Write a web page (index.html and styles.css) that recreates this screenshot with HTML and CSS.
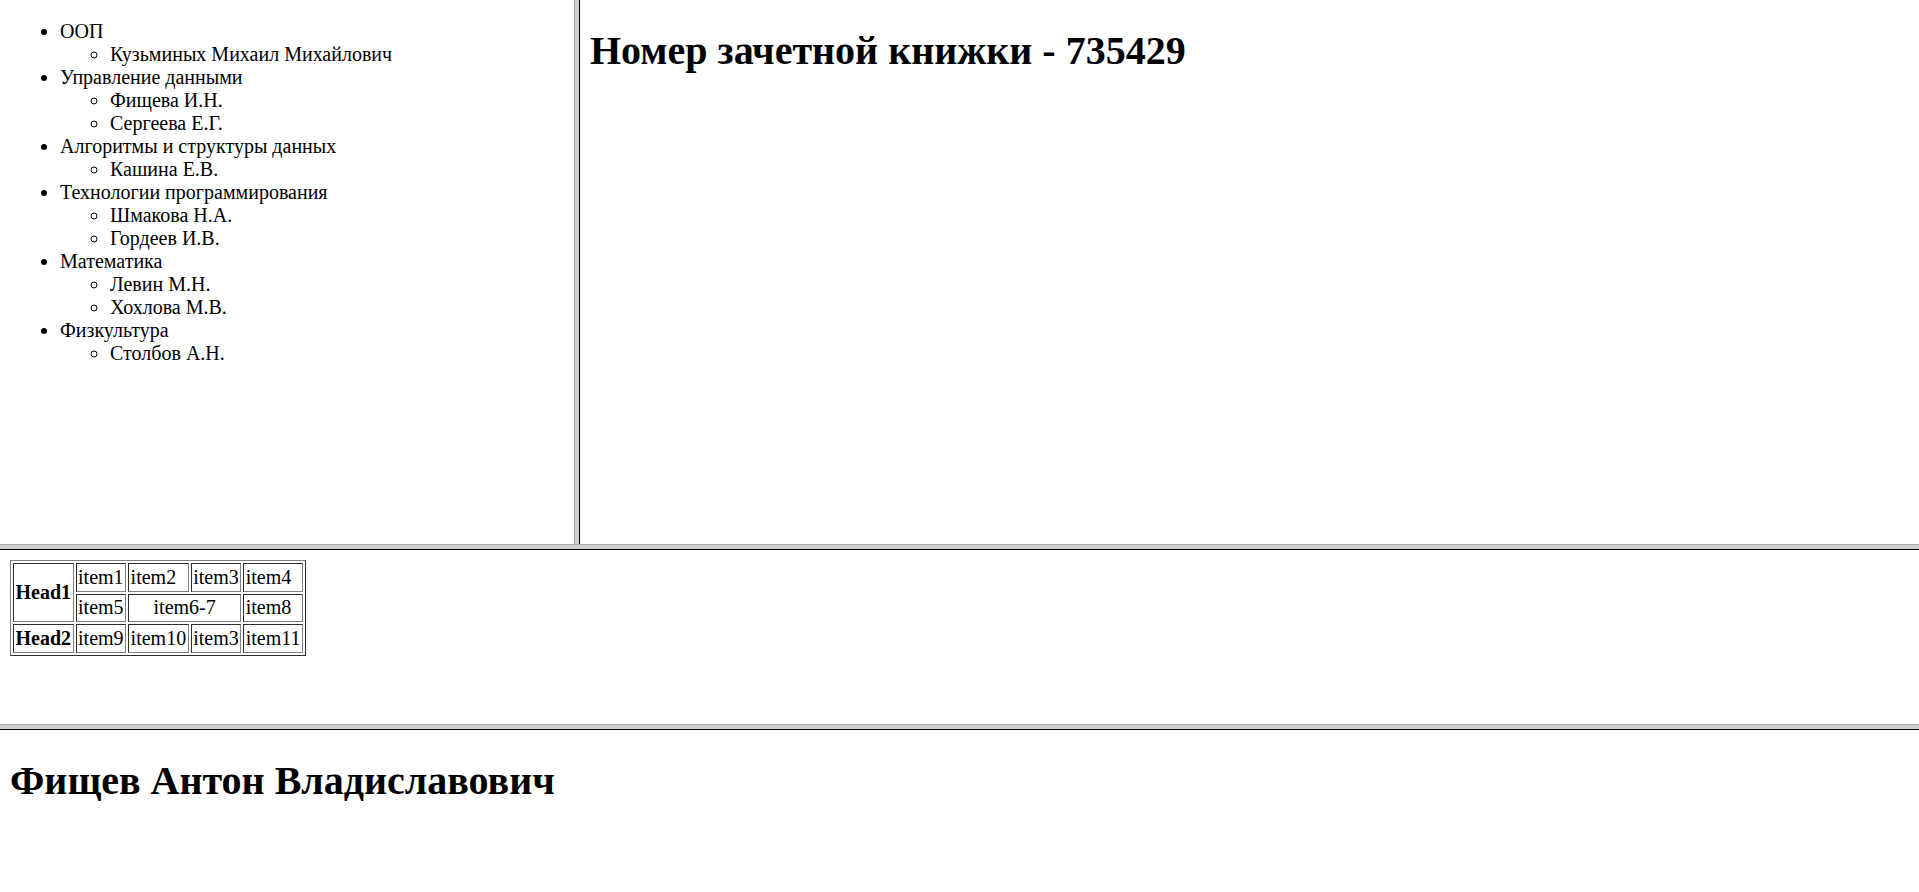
FILE: index.html
```html
<!DOCTYPE html>
<html lang="ru">
<head>
<meta charset="utf-8">
<title>Frames</title>
<link rel="stylesheet" href="styles.css">
</head>
<body>
<div class="page">
  <div class="top-row">
    <div class="frame frame-left">
      <ul class="subjects">
        <li>ООП
          <ul class="teachers"><li>Кузьминых Михаил Михайлович</li></ul>
        </li>
        <li>Управление данными
          <ul class="teachers"><li>Фищева И.Н.</li><li>Сергеева Е.Г.</li></ul>
        </li>
        <li>Алгоритмы и структуры данных
          <ul class="teachers"><li>Кашина Е.В.</li></ul>
        </li>
        <li>Технологии программирования
          <ul class="teachers"><li>Шмакова Н.А.</li><li>Гордеев И.В.</li></ul>
        </li>
        <li>Математика
          <ul class="teachers"><li>Левин М.Н.</li><li>Хохлова М.В.</li></ul>
        </li>
        <li>Физкультура
          <ul class="teachers"><li>Столбов А.Н.</li></ul>
        </li>
      </ul>
    </div>
    <div class="vborder"></div>
    <div class="frame frame-right">
      <h1 class="title">Номер зачетной книжки - 735429</h1>
    </div>
  </div>
  <div class="hborder"></div>
  <div class="frame frame-middle">
    <table class="grid-table" border="1">
      <tr><th rowspan="2">Head1</th><td>item1</td><td>item2</td><td>item3</td><td>item4</td></tr>
      <tr><td>item5</td><td colspan="2" class="center">item6-7</td><td>item8</td></tr>
      <tr><th>Head2</th><td>item9</td><td>item10</td><td>item3</td><td>item11</td></tr>
    </table>
  </div>
  <div class="hborder"></div>
  <div class="frame frame-bottom">
    <h1 class="title">Фищев Антон Владиславович</h1>
  </div>
</div>
</body>
</html>
```

FILE: styles.css
```css
html, body {
  margin: 0;
  padding: 0;
  height: 100%;
  background: #fff;
}
body {
  font-family: "Liberation Serif", "Times New Roman", serif;
  font-size: 20px;
  color: #000;
  overflow: hidden;
}
.page {
  display: flex;
  flex-direction: column;
  height: 892px;
  width: 1919px;
}
.top-row {
  display: flex;
  height: 544px;
  flex: 0 0 auto;
}
.frame {
  overflow: hidden;
  padding: 0 10px;
  box-sizing: border-box;
}
.frame-left {
  width: 574px;
  flex: 0 0 auto;
}
.frame-right {
  flex: 1 1 auto;
}
.vborder {
  width: 6px;
  flex: 0 0 auto;
  box-sizing: border-box;
  background: #d0d0d0;
  border-left: 1px solid #aaaaaa;
  border-right: 1px solid #000;
}
.hborder {
  height: 6px;
  flex: 0 0 auto;
  box-sizing: border-box;
  background: #d0d0d0;
  border-top: 1px solid #aaaaaa;
  border-bottom: 1px solid #000;
}
.frame-middle {
  height: 174px;
  flex: 0 0 auto;
  padding-top: 10px;
}
.frame-bottom {
  flex: 1 1 auto;
}
.subjects {
  margin: 20px 0;
  padding-left: 50px;
  list-style: disc;
}
.teachers {
  margin: 0;
  padding-left: 50px;
  list-style: circle;
}
.title {
  font-size: 40px;
  font-weight: bold;
  margin: 26.8px 0;
}
.grid-table {
  border-collapse: separate;
  border-spacing: 2.5px;
  border: 1px outset #808080;
  font-size: 20px;
}
.grid-table td,
.grid-table th {
  border: 1px inset #808080;
  padding: 1.75px 1.5px;
}
.grid-table td {
  text-align: left;
}
.grid-table td.center {
  text-align: center;
}
.grid-table th {
  font-weight: bold;
  text-align: center;
}
```
